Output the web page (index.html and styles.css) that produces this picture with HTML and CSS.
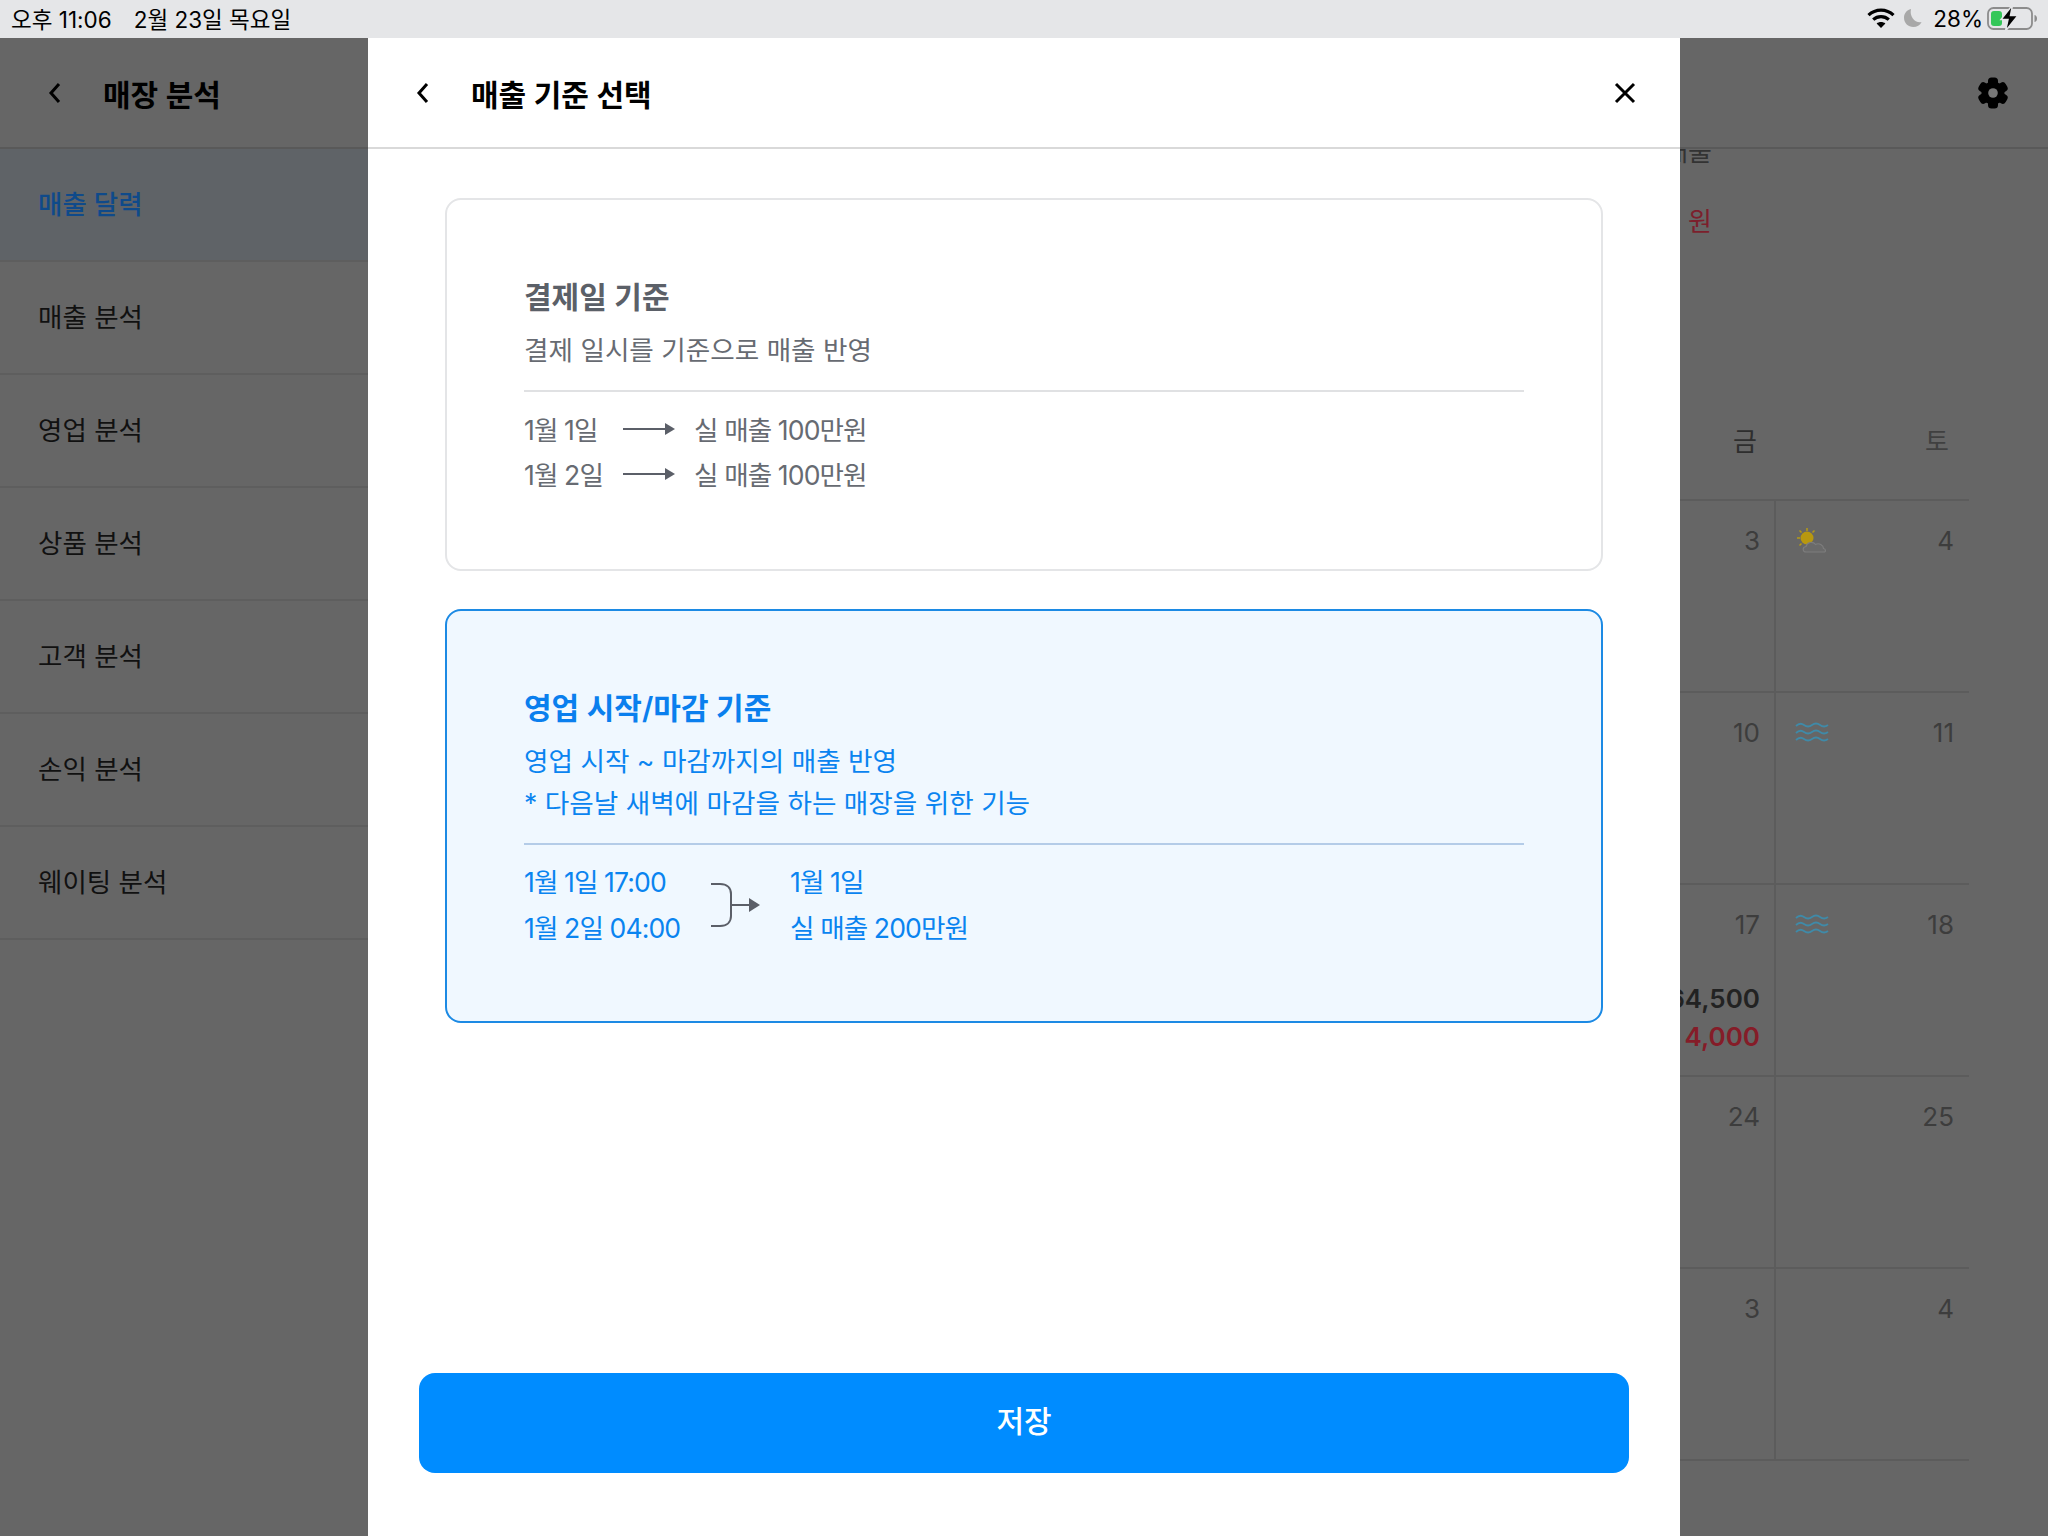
FILE: index.html
```html
<!DOCTYPE html>
<html lang="ko">
<head>
    <meta charset="UTF-8">
    <meta name="viewport" content="width=device-width, initial-scale=1.0">
    <title>매출 기준 선택</title>
    <link rel="stylesheet" href="styles.css">
</head>
<body>
    <div class="statusbar">
        <div class="status-left">
            <span>오후 11:06</span>
            <span>2월 23일 목요일</span>
        </div>
        <div class="status-right">
            <svg class="wifi" width="28" height="22" viewBox="0 0 28 22">
                <path d="M1.5 8.2C8.6 1.4 19.4 1.4 26.5 8.2" fill="none" stroke="#000" stroke-width="3.2"/>
                <path d="M6.2 12.6C10.6 8.6 17.4 8.6 21.8 12.6" fill="none" stroke="#000" stroke-width="3.2"/>
                <path d="M14 21L9.6 16.4C12 14.4 16 14.4 18.4 16.4Z" fill="#000"/>
            </svg>
            <svg class="moon" width="20" height="20" viewBox="0 0 20 20">
                <path d="M8 1C3.6 2 1 5.600 1 9.700C1 15 5.300 19 10.300 19C13.900 19 17 17.200 18.600 14C12.400 15.400 6.100 9 8 1Z" fill="#a8a8a8"/>
            </svg>
            <span class="battery-text">28%</span>
            <svg class="battery" width="52" height="26" viewBox="0 0 52 26">
                <rect x="1" y="3" width="44" height="21" rx="5.500" fill="none" stroke="#8c8c8c" stroke-width="1.800"/>
                <path d="M47.500 10C49.500 10.500 50 12 50 13.500C50 15 49.500 16.500 47.500 17Z" fill="#8c8c8c"/>
                <rect x="4" y="6" width="11" height="15" rx="3" fill="#34c759"/>
                <path d="M25.500 0L14 14.500H21L18.500 26L31 10.500H23.500Z" fill="#000" stroke="#e5e6e8" stroke-width="1.500"/>
            </svg>
        </div>
    </div>

    <div class="app">
        <aside class="sidebar">
            <div class="sidebar-head">
                <svg class="chevron" width="14" height="22" viewBox="0 0 14 22">
                    <path d="M11 2L3 11L11 20" fill="none" stroke="#000" stroke-width="3"/>
                </svg>
                <h2>매장 분석</h2>
            </div>
            <ul class="menu">
                <li class="selected">매출 달력</li>
                <li>매출 분석</li>
                <li>영업 분석</li>
                <li>상품 분석</li>
                <li>고객 분석</li>
                <li>손익 분석</li>
                <li>웨이팅 분석</li>
            </ul>
        </aside>

        <main class="calendar-page">
            <div class="page-head">
                <svg class="gear" width="32" height="32" viewBox="0 0 32 32">
                    <g fill="#000">
                        <circle cx="16" cy="16" r="11.500"/>
                        <rect x="11" y="0.500" width="10" height="31" rx="3.500"/>
                        <rect x="11" y="0.500" width="10" height="31" rx="3.500" transform="rotate(60 16 16)"/>
                        <rect x="11" y="0.500" width="10" height="31" rx="3.500" transform="rotate(120 16 16)"/>
                    </g>
                    <circle cx="16" cy="16" r="4.800" fill="#777"/>
                </svg>
            </div>
            <div class="summary">
                <div class="summary-label">실 매출</div>
                <div class="summary-value">100 원</div>
            </div>
            <div class="week-names">
                <div>금</div>
                <div class="sat">토</div>
            </div>
            <div class="weeks">
                <div class="day"><span class="date">3</span></div>
                <div class="day">
                    <svg class="weather sun" width="34" height="30" viewBox="0 0 34 30">
                        <g stroke="#b59a16" stroke-width="1.500">
                            <path d="M12 1V4M2 11H5M4.500 3.500L6.500 5.500M19.500 3.500L17.500 5.500M4.500 18.500L6.500 16.500"/>
                        </g>
                        <circle cx="12" cy="11" r="6.500" fill="#b8980f"/>
                        <path d="M11 25C7.500 25 7 20 11 19.500C12 15 18 14 20.500 17.500C24 15.500 28.500 18 28.500 21.500C31 22 31 25 29 25Z" fill="#6a6a6a" stroke="#7d7d7d" stroke-width="1.200"/>
                    </svg>
                    <span class="date">4</span>
                </div>
                <div class="day"><span class="date">10</span></div>
                <div class="day">
                    <svg class="weather" width="34" height="22" viewBox="0 0 34 22">
                        <g fill="none" stroke="#3f8aa8" stroke-width="1.800">
                            <path d="M1 5Q5 1 9 4T17 4T25 4T33 4"/>
                            <path d="M1 12Q5 8 9 11T17 11T25 11T33 11"/>
                            <path d="M1 19Q5 15 9 18T17 18T25 18T33 18"/>
                        </g>
                    </svg>
                    <span class="date">11</span>
                </div>
                <div class="day">
                    <span class="date">17</span>
                    <div class="amount">64,500</div>
                    <div class="amount loss">4,000</div>
                </div>
                <div class="day">
                    <svg class="weather" width="34" height="22" viewBox="0 0 34 22">
                        <g fill="none" stroke="#3f8aa8" stroke-width="1.800">
                            <path d="M1 5Q5 1 9 4T17 4T25 4T33 4"/>
                            <path d="M1 12Q5 8 9 11T17 11T25 11T33 11"/>
                            <path d="M1 19Q5 15 9 18T17 18T25 18T33 18"/>
                        </g>
                    </svg>
                    <span class="date">18</span>
                </div>
                <div class="day"><span class="date">24</span></div>
                <div class="day"><span class="date">25</span></div>
                <div class="day"><span class="date">3</span></div>
                <div class="day"><span class="date">4</span></div>
            </div>
        </main>

        <section class="modal">
            <div class="modal-head">
                <svg class="chevron" width="14" height="22" viewBox="0 0 14 22">
                    <path d="M11 2L3 11L11 20" fill="none" stroke="#000" stroke-width="3"/>
                </svg>
                <h2>매출 기준 선택</h2>
                <svg class="close" width="22" height="22" viewBox="0 0 22 22">
                    <path d="M2 2L20 20M20 2L2 20" fill="none" stroke="#000" stroke-width="3"/>
                </svg>
            </div>
            <div class="modal-body">
                <div class="option">
                    <h3>결제일 기준</h3>
                    <p>결제 일시를 기준으로 매출 반영</p>
                    <hr>
                    <div class="example">
                        <div class="example-row">
                            <span class="from">1월 1일</span>
                            <svg width="52" height="14" viewBox="0 0 52 14">
                                <path d="M0 7H44" stroke="#5b5f68" stroke-width="2"/>
                                <path d="M42 1L52 7L42 13Z" fill="#5b5f68"/>
                            </svg>
                            <span>실 매출 100만원</span>
                        </div>
                        <div class="example-row">
                            <span class="from">1월 2일</span>
                            <svg width="52" height="14" viewBox="0 0 52 14">
                                <path d="M0 7H44" stroke="#5b5f68" stroke-width="2"/>
                                <path d="M42 1L52 7L42 13Z" fill="#5b5f68"/>
                            </svg>
                            <span>실 매출 100만원</span>
                        </div>
                    </div>
                </div>

                <div class="option active">
                    <h3>영업 시작/마감 기준</h3>
                    <p>영업 시작 ~ 마감까지의 매출 반영</p>
                    <p>* 다음날 새벽에 마감을 하는 매장을 위한 기능</p>
                    <hr>
                    <div class="merge">
                        <div class="merge-times">
                            <div>1월 1일 17:00</div>
                            <div>1월 2일 04:00</div>
                        </div>
                        <svg width="50" height="46" viewBox="0 0 50 46">
                            <path d="M1 2H10C17 2 21 6 21 12V34C21 40 17 44 10 44H1M21 23H40" fill="none" stroke="#5b5f68" stroke-width="2"/>
                            <path d="M39 16L50 23L39 30Z" fill="#5b5f68"/>
                        </svg>
                        <div class="merge-result">
                            <div>1월 1일</div>
                            <div>실 매출 200만원</div>
                        </div>
                    </div>
                </div>

                <button class="save">저장</button>
            </div>
        </section>
    </div>
</body>
</html>
```

FILE: styles.css
```css
* {
    box-sizing: border-box;
}
body {
    margin: 0;
    width: 2048px;
    height: 1536px;
    overflow: hidden;
    font-family: "Inter", "Noto Sans CJK KR", sans-serif;
    background-color: #666;
    color: #000;
}
h2, h3, p, ul {
    margin: 0;
    padding: 0;
}
svg {
    display: block;
    flex: none;
}

/* status bar */
.statusbar {
    height: 38px;
    padding: 0 9px 2px 11px;
    display: flex;
    justify-content: space-between;
    align-items: center;
    background-color: #e5e6e8;
    font-size: 22.5px;
}
.status-left {
    display: flex;
    gap: 22px;
}
.status-right {
    display: flex;
    align-items: center;
}
.moon {
    margin-left: 8px;
}
.battery-text {
    margin-left: 10px;
}
.battery {
    margin-left: 4px;
}

/* screen behind the modal */
.app {
    position: relative;
    height: 1498px;
    display: flex;
    overflow: hidden;
}
.sidebar {
    width: 368px;
    flex: none;
}
.sidebar-head, .page-head {
    height: 111px;
    border-bottom: 2px solid #595959;
    display: flex;
    align-items: center;
}
.sidebar-head {
    padding-left: 48px;
}
.sidebar-head h2 {
    margin-left: 41px;
    font-size: 30px;
    font-weight: 600;
}
.menu {
    list-style: none;
}
.menu li {
    height: 113px;
    padding: 0 0 4px 38px;
    display: flex;
    align-items: center;
    border-bottom: 2px solid #5e5e5e;
    font-size: 26.5px;
    color: #111;
}
.menu li.selected {
    background-color: #5f6367;
    color: #0f4a8a;
    font-weight: 500;
}

.calendar-page {
    flex: 1;
    min-width: 0;
    padding-right: 79px;
    display: flex;
    flex-direction: column;
    align-items: flex-end;
}
.page-head {
    position: relative;
    z-index: 1;
    width: calc(100% + 79px);
    margin-right: -79px;
    padding-right: 39px;
    justify-content: flex-end;
    background-color: #666;
}
.summary {
    width: 386px;
    margin-top: -14px;
    padding-right: 257px;
    text-align: right;
    font-size: 26px;
}
.summary-label {
    line-height: 34px;
    color: #333;
}
.summary-value {
    margin-top: 36px;
    line-height: 34px;
    color: #7c1f2c;
}
.week-names {
    width: 386px;
    margin-top: 184px;
    height: 78px;
    display: grid;
    grid-template-columns: 193px 193px;
    border-bottom: 2px solid #5c5c5c;
    font-size: 26px;
    color: #2e2e2e;
}
.week-names div {
    text-align: right;
    padding-right: 19px;
    line-height: 38px;
}
.week-names .sat {
    padding-right: 20px;
    color: #404040;
}
.weeks {
    width: 386px;
    display: grid;
    grid-template-columns: 193px 193px;
    grid-auto-rows: 192px;
}
.day {
    position: relative;
    padding: 20px 15px 0;
    border-bottom: 2px solid #5c5c5c;
    text-align: right;
}
.day:nth-child(odd) {
    padding-right: 14px;
    border-right: 2px solid #5c5c5c;
}
.date {
    display: block;
    font-size: 26px;
    line-height: 40px;
    color: #3d3d3d;
}
.weather {
    position: absolute;
    top: 28px;
    left: 19px;
}
.weather.sun {
    top: 26px;
}
.amount {
    margin-top: 36px;
    font-size: 26px;
    font-weight: 600;
    line-height: 36px;
    color: #222;
}
.amount.loss {
    margin-top: 2px;
    color: #851c28;
}

/* modal */
.modal {
    position: absolute;
    z-index: 2;
    top: 0;
    bottom: 0;
    left: 368px;
    width: 1312px;
    display: flex;
    flex-direction: column;
    background-color: #fff;
}
.modal-head {
    height: 111px;
    padding: 0 44px 0 48px;
    display: flex;
    align-items: center;
    border-bottom: 2px solid #d9d9d9;
    flex: none;
}
.modal-head h2 {
    margin-left: 41px;
    font-size: 30px;
    font-weight: 600;
}
.close {
    margin-left: auto;
}
.modal-body {
    flex: 1;
    padding: 49px 51px 63px;
    display: flex;
    flex-direction: column;
    align-items: center;
}
.option {
    width: 1158px;
    padding: 77px 77px 73px;
    border: 2px solid #e4e5e7;
    border-radius: 16px;
    color: #676b72;
    font-size: 26.6px;
}
.option + .option {
    margin-top: 38px;
}
.option h3 {
    font-size: 30px;
    font-weight: 600;
    line-height: 40px;
    color: #5b6068;
}
.option p {
    margin-top: 16px;
    line-height: 34px;
}
.option hr {
    margin: 23px 0 0;
    border: none;
    border-top: 2px solid #e0e1e3;
}
.example {
    margin-top: 14px;
}
.example-row {
    height: 45px;
    display: flex;
    align-items: center;
    letter-spacing: -0.9px;
}
.example-row .from {
    width: 99px;
}
.example-row svg {
    margin-right: 19px;
}
.option.active {
    padding-bottom: 70px;
    border-color: #1c8ae4;
    background-color: #f0f8ff;
    color: #0a84f0;
}
.option.active h3 {
    color: #0a7fee;
}
.option.active p {
    margin-top: 8px;
}
.option.active h3 + p {
    margin-top: 16px;
}
.option.active hr {
    margin-top: 23px;
    border-top-color: #b4cce8;
}
.merge {
    margin-top: 14px;
    display: flex;
    align-items: center;
    letter-spacing: -0.9px;
}
.merge-times, .merge-result {
    line-height: 46px;
}
.merge-times {
    width: 186px;
}
.merge-result {
    margin-left: 30px;
}
.save {
    width: 100%;
    height: 100px;
    margin-top: auto;
    padding-bottom: 9px;
    border: none;
    border-radius: 16px;
    background-color: #008cff;
    color: #fff;
    font-family: inherit;
    font-size: 30px;
    font-weight: 500;
}
```
